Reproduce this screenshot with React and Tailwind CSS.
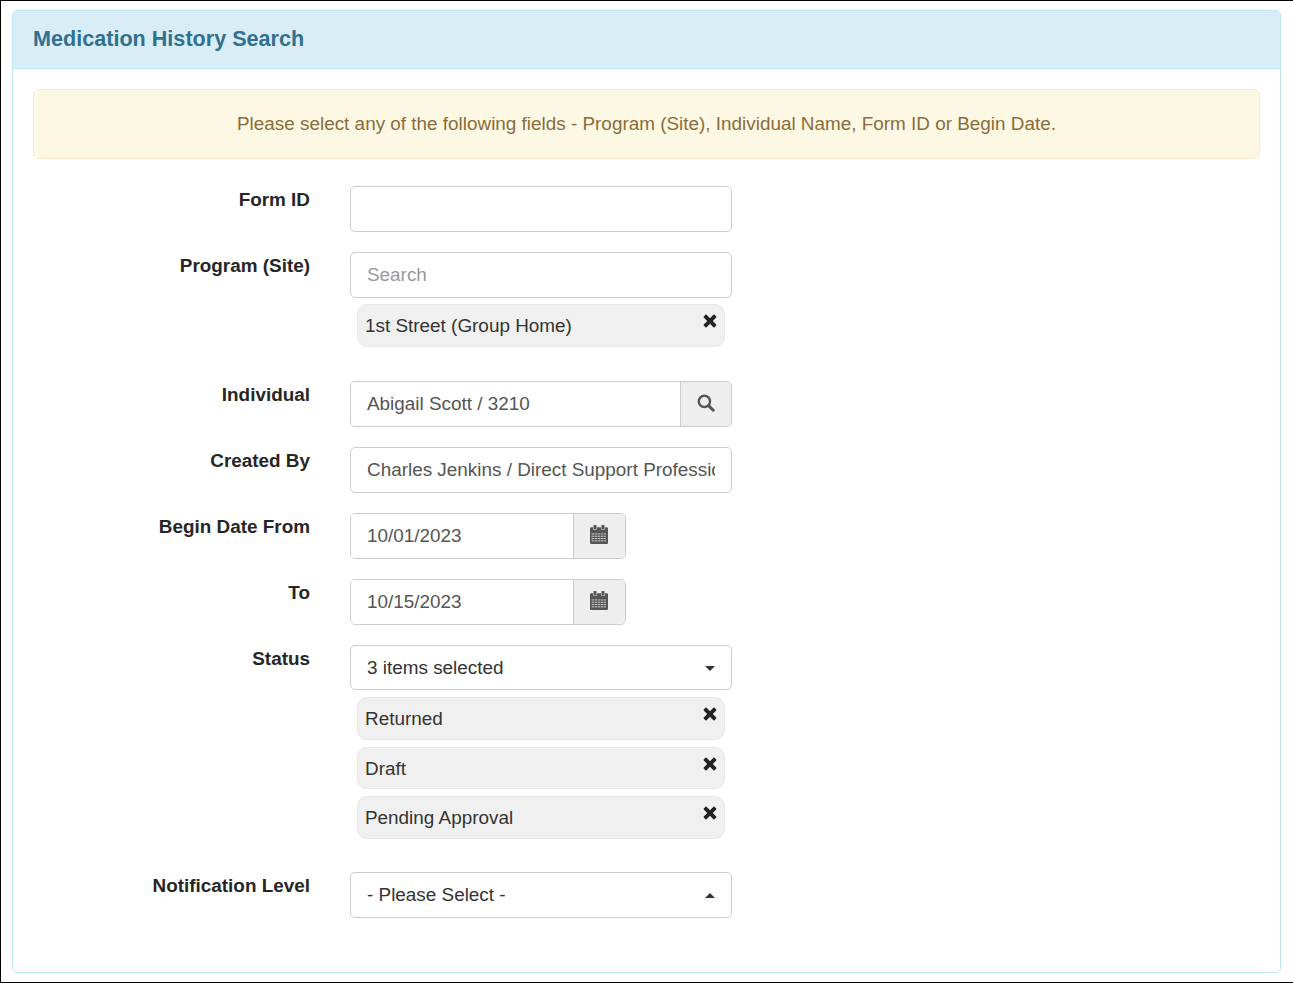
import React from "react";

function X() {
  return (
    <svg viewBox="0 0 14 14" className="w-[14px] h-[14px] text-[#222]" fill="currentColor">
      <path d="M3.6 0.8 L7 4.2 L10.4 0.8 Q11 0.3 11.6 0.8 L13.2 2.4 Q13.7 3 13.2 3.6 L9.8 7 L13.2 10.4 Q13.7 11 13.2 11.6 L11.6 13.2 Q11 13.7 10.4 13.2 L7 9.8 L3.6 13.2 Q3 13.7 2.4 13.2 L0.8 11.6 Q0.3 11 0.8 10.4 L4.2 7 L0.8 3.6 Q0.3 3 0.8 2.4 L2.4 0.8 Q3 0.3 3.6 0.8 Z" />
    </svg>
  );
}

function SearchIcon() {
  return (
    <svg viewBox="0 0 18 18" className="w-[18px] h-[18px] text-[#555]" fill="none" stroke="currentColor">
      <circle cx="7.4" cy="7.4" r="5.6" strokeWidth="2.4" />
      <path d="M11.6 11.6 L16.2 16.2" strokeWidth="3" strokeLinecap="round" />
    </svg>
  );
}

function CalendarIcon() {
  return (
    <svg viewBox="0 0 18 19" className="w-[18px] h-[19px] text-[#555] -translate-x-px -translate-y-[2px]" fill="currentColor">
      <rect x="3.5" y="0" width="3" height="4" rx="0.6" />
      <rect x="11.5" y="0" width="3" height="4" rx="0.6" />
      <path d="M1.2 2.2 H3 V4.5 H7 V2.2 H11 V4.5 H15 V2.2 H16.8 Q18 2.2 18 3.4 V17.8 Q18 19 16.8 19 H1.2 Q0 19 0 17.8 V3.4 Q0 2.2 1.2 2.2 Z" />
      <g fill="#efefef" opacity="0.7">
        {[8.4, 10.7, 13, 15.3].map((y) =>
          [1.6, 4.6, 7.6, 10.6, 13.6].map((x) => (
            <rect key={x + "-" + y} x={x} y={y} width="2.4" height="1.1" />
          ))
        )}
      </g>
    </svg>
  );
}

function Caret({ up }) {
  return (
    <svg viewBox="0 0 10 5" className="w-[10px] h-[5px] text-[#333]" fill="currentColor">
      <path d={up ? "M0 5 L5 0 L10 5 Z" : "M0 0 L5 5 L10 0 Z"} />
    </svg>
  );
}

function Chip({ children, className }) {
  return (
    <div className={"ml-[7px] w-[368px] flex justify-between rounded-[10px] border border-[#e8e8e8] bg-[#f0f0f0] pl-[7px] pr-[7px] " + className}>
      <span className="mt-[9px] text-[#333] leading-[24px]">{children}</span>
      <span className="mt-[9px]"><X /></span>
    </div>
  );
}

function Row({ label, children, className }) {
  return (
    <div className={"flex " + className}>
      <label className="w-[277px] pt-px text-right font-bold text-[#262626] leading-[26px]">{label}</label>
      <div className="ml-[40px] w-[382px]">{children}</div>
    </div>
  );
}

const field = "h-[46px] w-[382px] block border border-[#ccc] rounded-[5px] bg-white px-[16px] text-[#555] outline-none placeholder:text-[#999]";

function Grouped({ value, icon, width, addon }) {
  return (
    <div className={"h-[46px] flex border border-[#ccc] rounded-[5px] overflow-hidden " + width}>
      <div className="flex-1 flex items-center pl-[16px] text-[#555] bg-white">{value}</div>
      <div className={"flex items-center justify-center bg-[#eee] border-l border-[#ccc] " + addon}>{icon}</div>
    </div>
  );
}

export default function App() {
  return (
    <div className="h-[983px] bg-white border-l border-t border-b border-black pl-[11px] pr-[12px] pt-[9px] font-['Liberation_Sans',Arial,sans-serif] text-[18.9px]">
      <div className="h-[963px] border border-[#bce8f1] rounded-[5px] overflow-hidden">
        <div className="h-[58px] bg-[#d9edf7] border-b border-[#bce8f1] pl-[20px] pt-[14px] text-[21.6px] leading-[28px] font-bold text-[#31708f]">
          Medication History Search
        </div>
        <div className="px-[20px] pt-[20px]">
          <div className="h-[70px] flex items-center justify-center border border-[#faebcc] rounded-[5px] bg-[#fcf8e3] text-[#8a6d3b]">
            Please select any of the following fields - Program (Site), Individual Name, Form ID or Begin Date.
          </div>
          <div className="mt-[27px]">
            <Row label="Form ID" className="mb-[20px]">
              <input readOnly className={field} />
            </Row>
            <Row label="Program (Site)" className="mb-[34px]">
              <input readOnly className={field} placeholder="Search" />
              <Chip className="mt-[6px] h-[43px]">1st Street (Group Home)</Chip>
            </Row>
            <Row label="Individual" className="mb-[20px]">
              <Grouped value="Abigail Scott / 3210" icon={<SearchIcon />} width="w-[382px]" addon="w-[51px] pb-[2px]" />
            </Row>
            <Row label="Created By" className="mb-[20px]">
              <input readOnly className={field} value="Charles Jenkins / Direct Support Professional" />
            </Row>
            <Row label="Begin Date From" className="mb-[20px]">
              <Grouped value="10/01/2023" icon={<CalendarIcon />} width="w-[276px]" addon="w-[52px]" />
            </Row>
            <Row label="To" className="mb-[20px]">
              <Grouped value="10/15/2023" icon={<CalendarIcon />} width="w-[276px]" addon="w-[52px]" />
            </Row>
            <Row label="Status" className="mb-[33px]">
              <div className="h-[45px] w-[382px] flex items-center justify-between border border-[#ccc] rounded-[5px] bg-white pl-[16px] pr-[16px] pt-px text-[#333]">
                <span>3 items selected</span>
                <Caret />
              </div>
              <Chip className="mt-[7px] h-[43px]">Returned</Chip>
              <Chip className="mt-[7px] h-[42px]">Draft</Chip>
              <Chip className="mt-[7px] h-[43px]">Pending Approval</Chip>
            </Row>
            <Row label="Notification Level">
              <div className="h-[46px] w-[382px] flex items-center justify-between border border-[#ccc] rounded-[5px] bg-white pl-[16px] pr-[16px] text-[#333]">
                <span>- Please Select -</span>
                <Caret up />
              </div>
            </Row>
          </div>
        </div>
      </div>
    </div>
  );
}
